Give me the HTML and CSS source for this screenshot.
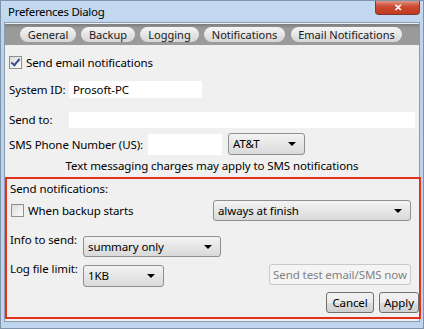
FILE: index.html
```html
<!DOCTYPE html>
<html>
<head>
	<title>Preferences Dialog</title>
	<meta charset="utf-8" />
	<link rel="stylesheet" href="styles.css">
</head>
<body>
<div class="window">
	<div class="titlebar">
		<span class="title">Preferences Dialog</span>
		<div class="close">&#x2715;</div>
	</div>
	<div class="client">
		<div class="tabs">
			<span class="tab t-general">General</span>
			<span class="tab t-backup">Backup</span>
			<span class="tab t-logging">Logging</span>
			<span class="tab t-notif">Notifications</span>
			<span class="tab t-email">Email Notifications</span>
		</div>
		<div class="row r-enable">
			<span class="check on"></span>
			<span>Send email notifications</span>
		</div>
		<div class="row r-sysid">
			<span class="label">System ID:</span>
			<span class="field sysid">Prosoft-PC</span>
		</div>
		<div class="row r-sendto">
			<span class="label">Send to:</span>
			<span class="field sendto"></span>
		</div>
		<div class="row r-sms">
			<span class="label-sms">SMS Phone Number (US):</span>
			<span class="field phone"></span>
			<span class="select carrier">AT&amp;T</span>
		</div>
		<div class="note">Text messaging charges may apply to SMS notifications</div>
		<div class="notify">
			<div class="row r-head">Send notifications:</div>
			<div class="row r-when">
				<span class="check"></span>
				<span>When backup starts</span>
				<span class="select finish">always at finish</span>
			</div>
			<div class="row r-info">
				<span class="label2">Info to send:</span>
				<span class="select info">summary only</span>
			</div>
			<div class="row r-log">
				<span class="label2">Log file limit:</span>
				<span class="select limit">1KB</span>
				<span class="button test">Send test email/SMS now</span>
			</div>
			<div class="row r-buttons">
				<span class="button cancel">Cancel</span>
				<span class="button apply">Apply</span>
			</div>
		</div>
	</div>
</div>
</body>
</html>
```
FILE: styles.css
```css
body{
	margin: 0px;
	padding: 0px;
	font-family: "Noto Sans", "Open Sans", sans-serif;
	font-size: 11.5px;
	letter-spacing: -0.1px;
	color: #000;
	white-space: nowrap;
}
.window{
	width: 424px;
	height: 329px;
	box-sizing: border-box;
	background: linear-gradient(#c4daf1, #b9d1ea 60px, #bfd6ee);
	border: 1px solid #7f93aa;
	overflow: hidden;
}
.titlebar{
	height: 21px;
	display: flex;
	align-items: flex-start;
}
.title{
	margin-left: 7px;
	margin-top: 2px;
	line-height: 18px;
	font-size: 11.5px;
	letter-spacing: -0.3px;
}
.close{
	margin-left: auto;
	margin-right: 3px;
	width: 45px;
	height: 15px;
	margin-top: -1px;
	box-sizing: border-box;
	border: 1px solid #7b3a33;
	border-top: none;
	border-radius: 0 0 4px 4px;
	background: linear-gradient(#e4a596, #cc4b32 45%, #c13a22);
	color: #fff;
	font-size: 10px;
	font-weight: bold;
	text-align: center;
	line-height: 14px;
}
.client{
	margin-left: 3px;
	width: 416px;
	height: 300px;
	box-sizing: border-box;
	background: #f0f0f0;
	border: 1px solid #8a9cb0;
	padding-left: 4px;
}
.tabs{
	height: 21px;
	margin-top: 1px;
	margin-left: -4px;
	padding-left: 15px;
	background: linear-gradient(#7c7c7c, #999 4px, #9b9b9b);
	display: flex;
	align-items: center;
	gap: 5px;
}
.tab{
	flex-shrink: 0;
	height: 15px;
	line-height: 15px;
	border-radius: 8px;
	background: linear-gradient(#f6f6f6, #e2e2e2 60%, #d6d6d6);
	color: #1a1a1a;
	text-align: center;
	font-size: 11px;
	letter-spacing: 0px;
}
.t-general{
	width: 56px;
}
.t-backup{
	width: 54px;
}
.t-logging{
	width: 59px;
}
.t-notif{
	width: 81px;
}
.t-email{
	width: 111px;
	margin-left: 1px;
}
.row{
	display: flex;
	align-items: center;
}
.r-enable{
	height: 18px;
	margin-top: 8px;
}
.check{
	flex-shrink: 0;
	width: 11px;
	height: 11px;
	border: 1px solid #8e8f8f;
	background: linear-gradient(135deg, #dcdcdc, #fbfbfb);
	margin-right: 4px;
	position: relative;
}
.check.on::after{
	content: "";
	position: absolute;
	left: 3px;
	top: 0px;
	width: 3px;
	height: 7px;
	border: solid #3b4e8c;
	border-width: 0 2px 2px 0;
	transform: rotate(40deg);
}
.label{
	width: 60px;
}
.field{
	background: #fff;
	height: 17px;
	line-height: 17px;
	padding-left: 4px;
	box-sizing: border-box;
}
.r-sysid{
	margin-top: 10px;
	height: 17px;
}
.sysid{
	width: 133px;
}
.r-sendto{
	margin-top: 13px;
	height: 17px;
}
.sendto{
	width: 346px;
	height: 16px;
}
.r-sms{
	margin-top: 5px;
	height: 22px;
}
.label-sms{
	width: 139px;
}
.phone{
	width: 74px;
	height: 21px;
	margin-right: 6px;
}
.select{
	flex-shrink: 0;
	height: 22px;
	box-sizing: border-box;
	border: 1px solid #8e8f8f;
	border-radius: 3px;
	background: linear-gradient(#f4f4f4, #e6e6e6 50%, #d9d9d9);
	line-height: 20px;
	padding-left: 4px;
	position: relative;
}
.select::after{
	content: "";
	position: absolute;
	right: 8px;
	top: 8px;
	border-left: 4px solid transparent;
	border-right: 4px solid transparent;
	border-top: 4px solid #000;
}
.carrier{
	width: 77px;
}
.note{
	margin-top: 3px;
	height: 16px;
	line-height: 16px;
	text-align: center;
	padding-right: 4px;
}
.notify{
	margin-top: 3px;
	margin-left: -4px;
	width: 416px;
	box-sizing: border-box;
	border: 2px solid #e5301c;
	padding: 1px 0 4px 3px;
}
.r-head{
	height: 16px;
}
.r-when{
	margin-top: 4px;
	height: 21px;
}
.r-when .check{
	margin-left: 1px;
}
.finish{
	width: 198px;
	height: 21px;
	margin-left: auto;
	margin-right: 8px;
}
.label2{
	width: 73px;
	line-height: 14px;
}
.r-info, .r-log{
	align-items: flex-start;
}
.r-info{
	margin-top: 12px;
	height: 24px;
}
.r-info .select{
	margin-top: 3px;
	width: 138px;
	height: 21px;
}
.r-log{
	margin-top: 5px;
	height: 25px;
}
.r-log .select{
	margin-top: 3px;
	width: 81px;
}
.button{
	flex-shrink: 0;
	height: 21px;
	box-sizing: border-box;
	border: 1px solid #707070;
	border-radius: 3px;
	background: linear-gradient(#f2f2f2, #ebebeb 50%, #dddddd 51%, #cfcfcf);
	line-height: 19px;
	text-align: center;
}
.test{
	margin-left: auto;
	margin-right: 8px;
	margin-top: 2px;
	width: 142px;
	border-color: #c9c9c9;
	background: #f4f4f4;
	color: #838383;
}
.r-buttons{
	margin-top: 5px;
	height: 21px;
	justify-content: flex-end;
	gap: 5px;
}
.cancel{
	width: 48px;
}
.apply{
	width: 40px;
}
```
